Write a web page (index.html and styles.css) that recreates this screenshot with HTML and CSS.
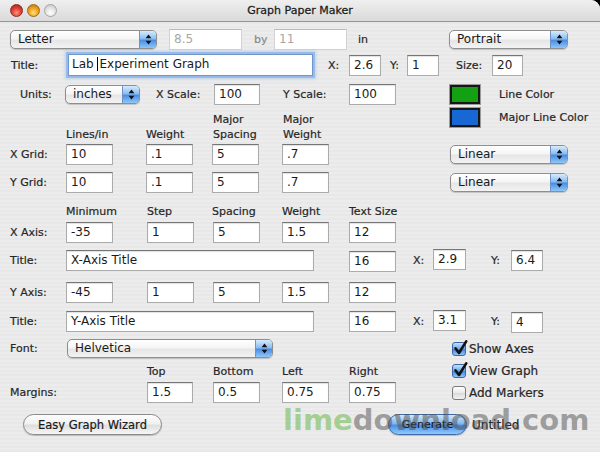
FILE: index.html
```html
<!DOCTYPE html>
<html lang="en">
<head>
<meta charset="utf-8">
<title>Graph Paper Maker</title>
<link rel="stylesheet" href="styles.css">
</head>
<body>
<svg class="defs" width="0" height="0" aria-hidden="true">
  <symbol id="updown" viewBox="0 0 7 11"><path d="M3.5 0.6 L6.4 4.2 H0.6 Z M3.5 10.4 L6.4 6.8 H0.6 Z" fill="#111"/></symbol>
  <symbol id="tick" viewBox="0 0 16 16"><path d="M3.6 8.4 L7 13 L14.2 1.4" fill="none" stroke="#111" stroke-width="2.6" stroke-linecap="round" stroke-linejoin="round"/></symbol>
</svg>
<div class="window">
  <header class="titlebar">
    <div class="lights">
      <span class="light red"></span><span class="light amber"></span><span class="light off"></span>
    </div>
    <h1 class="wtitle">Graph Paper Maker</h1>
    <div></div>
  </header>

  <main class="content">
    <!-- paper size / orientation -->
    <div class="row r-page">
      <div class="popup w147"><span class="ptext">Letter</span><span class="cap"><svg width="7" height="11"><use href="#updown"/></svg></span></div>
      <div class="field dis w73">8.5</div>
      <span class="lbl dim">by</span>
      <div class="field dis w73">11</div>
      <span class="lbl">in</span>
      <div class="popup w119"><span class="ptext">Portrait</span><span class="cap"><svg width="7" height="11"><use href="#updown"/></svg></span></div>
    </div>

    <!-- graph title -->
    <div class="row r-title">
      <span class="lbl">Title:</span>
      <div class="field focus w245">Lab <span class="caret"></span>Experiment Graph</div>
      <span class="lbl">X:</span>
      <div class="field w32">2.6</div>
      <span class="lbl">Y:</span>
      <div class="field w32">1</div>
      <span class="lbl">Size:</span>
      <div class="field w31">20</div>
    </div>

    <!-- units and scale -->
    <div class="row r-units">
      <span class="lbl">Units:</span>
      <div class="popup w75"><span class="ptext">inches</span><span class="cap"><svg width="7" height="11"><use href="#updown"/></svg></span></div>
      <span class="lbl">X Scale:</span>
      <div class="field w46">100</div>
      <span class="lbl">Y Scale:</span>
      <div class="field w47">100</div>
      <span class="swatch green"></span>
      <span class="lbl">Line Color</span>
    </div>

    <!-- grid lines -->
    <div class="grid r-head">
      <span class="hd c2">Lines/in</span>
      <span class="hd c3">Weight</span>
      <span class="hd c4 n1">Major<br>Spacing</span>
      <span class="hd c5 n1">Major<br>Weight</span>
      <div class="side swrow"><span class="swatch blue"></span><span class="lbl">Major Line Color</span></div>
    </div>
    <div class="grid r-xgrid">
      <span class="lbl c1">X Grid:</span>
      <div class="field w47 c2">10</div>
      <div class="field w47 c3">.1</div>
      <div class="field w47 c4">5</div>
      <div class="field w47 c5">.7</div>
      <div class="popup w118 side"><span class="ptext">Linear</span><span class="cap"><svg width="7" height="11"><use href="#updown"/></svg></span></div>
    </div>
    <div class="grid r-ygrid">
      <span class="lbl c1">Y Grid:</span>
      <div class="field w47 c2">10</div>
      <div class="field w47 c3">.1</div>
      <div class="field w47 c4">5</div>
      <div class="field w47 c5">.7</div>
      <div class="popup w118 side"><span class="ptext">Linear</span><span class="cap"><svg width="7" height="11"><use href="#updown"/></svg></span></div>
    </div>

    <!-- axes -->
    <div class="grid r-axhead">
      <span class="hd c2">Minimum</span>
      <span class="hd c3 n1">Step</span>
      <span class="hd c4">Spacing</span>
      <span class="hd c5">Weight</span>
      <span class="hd c6">Text Size</span>
    </div>
    <div class="grid r-xaxis">
      <span class="lbl c1">X Axis:</span>
      <div class="field w47 c2">-35</div>
      <div class="field w47 c3 n1">1</div>
      <div class="field w47 c4 n1">5</div>
      <div class="field w47 c5">1.5</div>
      <div class="field w47 c6">12</div>
    </div>
    <div class="grid r-xtitle">
      <span class="lbl c1">Title:</span>
      <div class="field w248 wide">X-Axis Title</div>
      <div class="field w47 c6 low">16</div>
      <span class="lbl c7">X:</span>
      <div class="field w33 c8 high">2.9</div>
      <span class="lbl c9">Y:</span>
      <div class="field w32 c10">6.4</div>
    </div>
    <div class="grid r-yaxis">
      <span class="lbl c1">Y Axis:</span>
      <div class="field w47 c2">-45</div>
      <div class="field w47 c3 n1">1</div>
      <div class="field w47 c4 n1">5</div>
      <div class="field w47 c5">1.5</div>
      <div class="field w47 c6">12</div>
    </div>
    <div class="grid r-ytitle">
      <span class="lbl c1">Title:</span>
      <div class="field w248 wide">Y-Axis Title</div>
      <div class="field w47 c6">16</div>
      <span class="lbl c7">X:</span>
      <div class="field w33 c8 high">3.1</div>
      <span class="lbl c9">Y:</span>
      <div class="field w32 c10 low">4</div>
    </div>

    <!-- font, margins, options -->
    <div class="grid r-font">
      <span class="lbl c1">Font:</span>
      <div class="popup w206 wide n1"><span class="ptext">Helvetica</span><span class="cap"><svg width="7" height="11"><use href="#updown"/></svg></span></div>
      <label class="side chk opt"><span class="check on"><svg width="16" height="16"><use href="#tick"/></svg></span>Show Axes</label>
    </div>
    <div class="grid r-mhead">
      <span class="hd c3 n1">Top</span>
      <span class="hd c4 n1">Bottom</span>
      <span class="hd c5">Left</span>
      <span class="hd c6">Right</span>
      <label class="side chk opt"><span class="check on"><svg width="16" height="16"><use href="#tick"/></svg></span>View Graph</label>
    </div>
    <div class="grid r-margins">
      <span class="lbl c1 span2">Margins:</span>
      <div class="field w46 c3 n1">1.5</div>
      <div class="field w47 c4 n1">0.5</div>
      <div class="field w47 c5">0.75</div>
      <div class="field w47 c6">0.75</div>
      <label class="side chk opt"><span class="check"></span>Add Markers</label>
    </div>

    <!-- actions -->
    <div class="row r-buttons">
      <button class="btn wizard">Easy Graph Wizard</button>
      <button class="btn primary generate">Generate</button>
      <span class="doc">Untitled</span>
    </div>
  </main>

  <div class="mark"><span class="lime">lime</span><span class="dl">download.com</span></div>
</div>
</body>
</html>
```

FILE: styles.css
```css
* { box-sizing: border-box; }

html, body {
  margin: 0;
  padding: 0;
}

body {
  width: 600px;
  height: 452px;
  overflow: hidden;
  background: #000;
  font-family: "DejaVu Sans", "Lucida Grande", sans-serif;
  font-size: 11px;
  color: #262626;
}

.defs { position: absolute; width: 0; height: 0; }

/* window chrome */
.window {
  position: relative;
  width: 600px;
  height: 452px;
  overflow: hidden;
  border-top-right-radius: 9px;
  background: repeating-linear-gradient(to bottom, #ececec 0, #ececec 2px, #e8e8e8 2px, #e8e8e8 4px);
}

.titlebar {
  height: 22px;
  display: grid;
  grid-template-columns: 1fr auto 1fr;
  align-items: center;
  background: linear-gradient(#efefef, #dadada);
  border-bottom: 1px solid #959595;
}

.lights {
  display: flex;
  gap: 4px;
  padding-left: 10px;
}

.light {
  width: 13px;
  height: 13px;
  border-radius: 50%;
}
.light.red {
  background: radial-gradient(circle at 50% 70%, #ff8f7a 0, #e0453a 45%, #a41a12 100%);
  border: 1px solid #8d2a22;
}
.light.amber {
  background: radial-gradient(circle at 50% 70%, #ffe07a 0, #f2a627 45%, #b86f06 100%);
  border: 1px solid #9a6a1a;
}
.light.off {
  background: radial-gradient(circle at 50% 70%, #ffffff 0, #e4e4e4 50%, #bcbcbc 100%);
  border: 1px solid #a4a4a4;
}

.wtitle {
  margin: 0;
  font-size: 11px;
  font-weight: normal;
  color: #1c1c1c;
  text-shadow: 0 1px 0 rgba(255, 255, 255, .6);
  -webkit-text-stroke: 0.3px #1c1c1c;
}

/* rows */
.row {
  display: grid;
  align-items: center;
}

.r-page {
  margin-top: 7px;
  height: 21px;
  padding-left: 10px;
  grid-template-columns: 159px 85px 20px 84px 91px 119px;
}

.r-title {
  margin-top: 4px;
  height: 22px;
  padding-left: 11px;
  grid-template-columns: 57px 260px 21px 41px 17px 49px 36px 31px;
}

.r-units {
  margin-top: 8px;
  height: 21px;
  padding-left: 20px;
  grid-template-columns: 45px 91px 58px 69px 66px 101px 49px auto;
}

.grid {
  display: grid;
  grid-template-columns: 56px 80px 66px 70px 67px 64px 20px 58px 20px 1fr;
  padding-left: 10px;
  align-items: center;
}
.grid > * { grid-row: 1; }

.c1 { grid-column: 1; }
.c2 { grid-column: 2; }
.c3 { grid-column: 3; }
.c4 { grid-column: 4; }
.c5 { grid-column: 5; }
.c6 { grid-column: 6; }
.c7 { grid-column: 7; }
.c8 { grid-column: 8; }
.c9 { grid-column: 9; }
.c10 { grid-column: 10; }
.span2 { grid-column: 1 / span 2; }
.wide { grid-column: 2 / span 4; }
.side { grid-column: 8 / -1; margin-left: 17px; }
.side.chk { margin-left: 19px; }
.n1 { margin-left: 1px; }
.low { margin-top: 3px; }
.high { margin-top: -2px; }

.r-head { margin-top: 1px; height: 36px; }
.r-xgrid { margin-top: 2px; height: 21px; }
.r-ygrid { margin-top: 7px; height: 21px; }
.r-axhead { margin-top: 11px; height: 15px; }
.r-xaxis { margin-top: 3px; height: 21px; }
.r-xtitle { margin-top: 5px; height: 22px; }
.r-yaxis { margin-top: 12px; height: 21px; }
.r-ytitle { margin-top: 6px; height: 21px; }
.r-font { margin-top: 9px; height: 19px; }
.r-mhead { margin-top: 4px; height: 17px; }
.r-margins { margin-top: 3px; height: 21px; }

.r-buttons {
  margin-top: 11px;
  height: 21px;
  display: flex;
  align-items: center;
  padding-left: 23px;
}

/* text */
.lbl, .hd, .opt, .doc {
  -webkit-text-stroke: 0.2px currentColor;
}
.lbl {
  white-space: nowrap;
  color: #262626;
}
.lbl.dim { color: #8a8a8a; }

.hd {
  align-self: end;
  line-height: 15px;
  white-space: nowrap;
}

.swrow {
  align-self: start;
  margin-top: 2px;
  display: flex;
  align-items: center;
  gap: 19px;
}

/* text fields */
.field {
  height: 21px;
  background: #fff;
  border: 1px solid #ababab;
  border-top-color: #757575;
  box-shadow: inset 0 1px 1px rgba(0, 0, 0, .12);
  font-size: 12px;
  line-height: 19px;
  padding-left: 4px;
  color: #1a1a1a;
  white-space: nowrap;
  overflow: hidden;
}
.field.dis {
  color: #a8a8a8;
  border-color: #d2d2d2;
  border-top-color: #bababa;
  box-shadow: none;
}
.field.focus {
  height: 22px;
  padding-left: 3px;
  border-color: #6f95cc;
  box-shadow: 0 0 0 2px #97bbea, 0 0 3px 3px rgba(110, 160, 225, .35);
}

.caret {
  display: inline-block;
  width: 1px;
  height: 14px;
  margin-right: 1px;
  vertical-align: -3px;
  background: #000;
}

.w31 { width: 31px; }
.w32 { width: 32px; }
.w33 { width: 33px; }
.w46 { width: 46px; }
.w47 { width: 47px; }
.w73 { width: 73px; }
.w75 { width: 75px; }
.w118 { width: 118px; }
.w119 { width: 119px; }
.w147 { width: 147px; }
.w206 { width: 206px; }
.w245 { width: 245px; }
.w248 { width: 248px; }

/* pop-up menus */
.popup {
  height: 19px;
  display: flex;
  align-items: stretch;
  border: 1px solid #8e8e8e;
  border-radius: 5px;
  overflow: hidden;
  background: linear-gradient(#ffffff 0%, #f5f5f5 45%, #e6e6e6 55%, #f3f3f3 100%);
  box-shadow: 0 1px 1px rgba(0, 0, 0, .18);
  font-size: 12px;
  color: #1a1a1a;
}
.popup .ptext {
  flex: 1;
  padding-left: 7px;
  line-height: 17px;
  white-space: nowrap;
}
.popup .cap {
  width: 17px;
  display: flex;
  align-items: center;
  justify-content: center;
  border-left: 1px solid #6d93c6;
  background: linear-gradient(#d8ebfd 0%, #8bbdf1 45%, #4a8ee4 55%, #8ec7f8 100%);
}

/* colour wells */
.swatch {
  width: 30px;
  height: 19px;
  border: 2px solid #161616;
  outline: 1px solid #9a9a9a;
}
.swatch.green { background: #13a012; }
.swatch.blue { background: #1768d4; }

/* check boxes */
.opt {
  display: flex;
  align-items: center;
  gap: 3px;
  font-size: 12px;
  color: #262626;
  white-space: nowrap;
}
.check {
  width: 14px;
  height: 14px;
  flex: none;
  border-radius: 3px;
  border: 1px solid #7a7a7a;
  background: linear-gradient(#ffffff, #e8e8e8 50%, #d8d8d8 50%, #f2f2f2);
  display: flex;
  align-items: flex-end;
  justify-content: center;
}
.check.on {
  border-color: #41659f;
  background: linear-gradient(#c6e1fc 0%, #70abee 45%, #3f88e2 55%, #8ec6f8 100%);
}
.check svg {
  flex: none;
  margin-bottom: -1px;
  margin-left: 2px;
}

/* push buttons */
.btn {
  height: 21px;
  padding: 0;
  border-radius: 11px;
  border: 1px solid #8a8a8a;
  background: linear-gradient(#fdfdfd 0%, #f1f1f1 45%, #dfdfdf 55%, #f6f6f6 100%);
  box-shadow: 0 1px 1px rgba(0, 0, 0, .2);
  font-family: "DejaVu Sans", "Lucida Grande", sans-serif;
  font-size: 11.5px;
  color: #1a1a1a;
  -webkit-text-stroke: 0.2px #1a1a1a;
}
.wizard { width: 139px; }
.generate {
  width: 79px;
  margin-left: 226px;
  font-size: 11px;
}
.btn.primary {
  border-color: #3e68a6;
  background: linear-gradient(#d3e8fd 0%, #80b8f0 45%, #4b8fe5 55%, #8fcafb 100%);
}
.doc {
  margin-left: 5px;
  font-size: 12px;
  color: #262626;
}

/* site watermark laid over the lower right of the window */
.mark {
  position: absolute;
  left: 283px;
  top: 402px;
  font-family: "DejaVu Sans", sans-serif;
  font-weight: bold;
  font-size: 29px;
  line-height: 36px;
  white-space: nowrap;
  pointer-events: none;
}
.mark .lime { color: rgba(94, 178, 58, .5); }
.mark .dl { color: rgba(80, 80, 80, .5); }
```
